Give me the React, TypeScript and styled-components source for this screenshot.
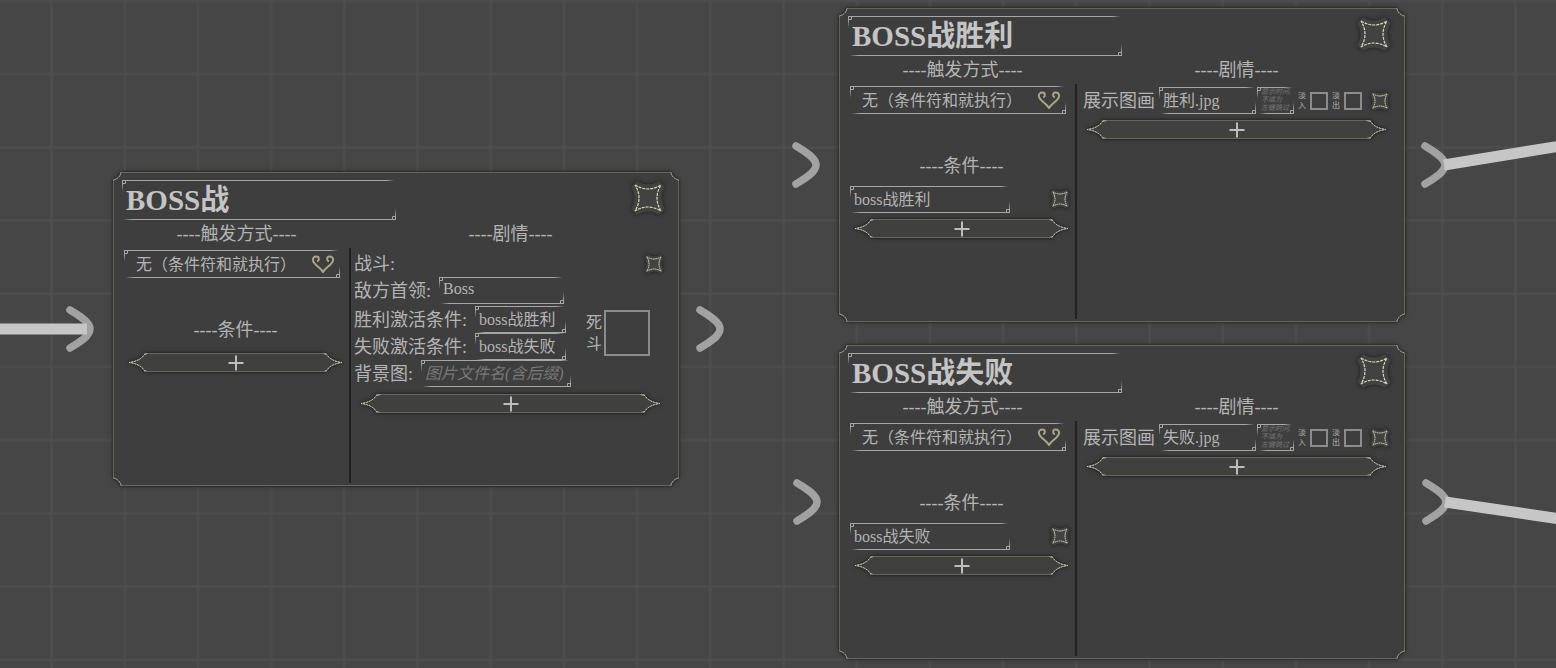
import React from 'react';
import styled, { createGlobalStyle } from 'styled-components';

const color = {
  canvas: '#464646',
  grid: '#4d4d4d',
  node: '#3e3e3e',
  edge: '#66665f',
  text: '#b4b4b4',
  title: '#c4c4c4',
  line: '#a6a6a6',
  faint: '#777777',
  ivory: '#d8d6c0',
  gold: '#aba684',
  wire: '#c6c6c6',
  port: '#a2a2a2',
};

const svgUrl = (width: number, height: number, body: string) =>
  `url("data:image/svg+xml,${encodeURIComponent(
    `<svg xmlns="http://www.w3.org/2000/svg" width="${width}" height="${height}">${body}</svg>`,
  )}")`;

/* Panel outline: straight edges with notched corners. */
const panelFrame = svgUrl(
  48,
  48,
  `<path d="M8 .5H40Q41 6 47.5 8V40Q41 42 40 47.5H8Q7 42 .5 40V8Q7 6 8 .5Z" fill="${color.node}" stroke="${color.edge}"/>
   <path d="M.5 8Q7 6 8 .5M40 .5Q41 6 47.5 8M47.5 40Q41 42 40 47.5M8 47.5Q7 42 .5 40" fill="none" stroke="${color.ivory}" stroke-dasharray="1 1"/>`,
);

/* Field outline: open corners, lines fading away at two ends. */
const fieldFrame = svgUrl(
  40,
  40,
  `<defs>
    <linearGradient id="t" gradientUnits="userSpaceOnUse" x1="0" x2="40" y1="0" y2="0"><stop offset=".75" stop-color="${color.line}"/><stop offset=".96" stop-color="${color.line}" stop-opacity="0"/></linearGradient>
    <linearGradient id="b" gradientUnits="userSpaceOnUse" x1="0" x2="40" y1="0" y2="0"><stop offset=".04" stop-color="${color.line}" stop-opacity="0"/><stop offset=".25" stop-color="${color.line}"/></linearGradient>
    <linearGradient id="l" x1="0" x2="0" y1="0" y2="1"><stop offset=".3" stop-color="${color.line}"/><stop offset="1" stop-color="${color.line}" stop-opacity="0"/></linearGradient>
    <linearGradient id="r" x1="0" x2="0" y1="0" y2="1"><stop offset="0" stop-color="${color.line}" stop-opacity="0"/><stop offset=".7" stop-color="${color.line}"/></linearGradient>
   </defs>
   <rect width="40" height="1" fill="url(#t)"/><rect y="39" width="40" height="1" fill="url(#b)"/>
   <rect width="1" height="12" fill="url(#l)"/><rect x="39" y="28" width="1" height="12" fill="url(#r)"/>
   <path d="M.5 .5h3v3h-3zM36.5 36.5h3v3h-3z" fill="none" stroke="${color.line}"/>`,
);

/* Long button outline: concave pointed ends. */
const plankFrame = svgUrl(
  60,
  19,
  `<path d="M17 .5H43Q47 8 59 9.5Q47 11 43 18.5H17Q13 11 1 9.5Q13 8 17 .5Z" fill="#40403f" stroke="${color.edge}"/>
   <path d="M17 .5Q13 8 1 9.5Q13 11 17 18.5M43 .5Q47 8 59 9.5Q47 11 43 18.5" fill="none" stroke="${color.ivory}" stroke-dasharray="2 1"/>`,
);

const GlobalStyle = createGlobalStyle`
  *, *::before, *::after { box-sizing: border-box; }
  body {
    margin: 0;
    background: ${color.canvas};
    color: ${color.text};
    font-family: "Liberation Serif", "Noto Sans CJK SC", serif;
    font-size: 18px;
    line-height: 28px;
  }
  input, select, textarea, button { margin: 0; font-family: inherit; color: inherit; }
`;

const Canvas = styled.main`
  position: relative;
  width: 100%;
  min-height: 100vh;
  overflow: hidden;
`;

const Backdrop = styled.svg`
  position: absolute;
  inset: 0;
  width: 100%;
  height: 100%;
  pointer-events: none;
`;

const Node = styled.article<{ $x: number; $y: number }>`
  position: absolute;
  left: ${(p) => p.$x}px;
  top: ${(p) => p.$y}px;
  width: 566px;
  padding: 8px 9px 3px;
  isolation: isolate;

  &::before {
    content: "";
    position: absolute;
    inset: 0;
    z-index: -1;
    border: 1px solid transparent;
    border-image: ${panelFrame} 12 fill / 12px;
    filter: drop-shadow(0 0 1px #222) drop-shadow(0 0 2px #2c2c2c);
  }
`;

const NodeHeader = styled.header`
  display: flex;
  justify-content: space-between;
  align-items: flex-start;
  height: 40px;
  padding-right: 4px;
`;

const Field = styled.input<{ $width?: number }>`
  width: ${(p) => (p.$width ? `${p.$width}px` : 'auto')};
  height: 27px;
  padding: 0 3px 3px;
  border: 1px solid transparent;
  border-image: ${fieldFrame} 13 / 13px;
  background: none;
  font-size: 16px;
  outline: none;

  &:placeholder-shown { padding-bottom: 0; }

  &::placeholder {
    color: ${color.faint};
    font-style: italic;
    opacity: 1;
  }
`;

const TitleField = styled(Field)`
  height: 40px;
  padding-bottom: 6px;
  font-size: 29px;
  font-weight: bold;
  color: ${color.title};
`;

const Columns = styled.div`
  display: grid;
  grid-template-columns: 229px 1fr;
  grid-template-rows: 28px minmax(235px, auto);
`;

const Heading = styled.h3`
  margin: 0;
  font-size: 18px;
  font-weight: normal;
  line-height: 28px;
  text-align: center;
`;

const TriggerColumn = styled.section`
  border-right: 2px solid #212121;
  padding-top: 2px;
`;

const StoryColumn = styled.section`
  padding: 3px 3px 0;
`;

const SelectBox = styled.div`
  display: grid;
  align-items: center;
  width: 216px;
  margin: 0 0 38px 2px;

  & > * { grid-area: 1 / 1; }
`;

const Select = styled.select`
  width: 100%;
  height: 28px;
  padding: 0 32px 0 11px;
  border: 1px solid transparent;
  border-image: ${fieldFrame} 13 / 13px;
  border-radius: 0;
  background: none;
  font-size: 16px;
  appearance: none;
  outline: none;
`;

const Ornament = styled.svg`
  justify-self: end;
  margin-right: 5px;
  fill: none;
  stroke: ${color.gold};
  stroke-width: 2;
  pointer-events: none;
`;

const ConditionList = styled.ul`
  list-style: none;
  margin: 0;
  padding: 4px 0 5px 2px;
`;

const Condition = styled.li`
  display: flex;
  align-items: center;
  justify-content: space-between;
  height: 30px;
  padding-right: 5px;
`;

const PlankButton = styled.button<{ $gap?: number }>`
  display: grid;
  place-items: center;
  width: calc(100% - 12px);
  height: 19px;
  margin: ${(p) => p.$gap ?? 0}px 6px 0;
  padding: 0;
  border: 1px solid transparent;
  border-image: ${plankFrame} 9 17 fill / 9px 17px;
  background: none;
  filter: drop-shadow(0 0 1px #222) drop-shadow(0 0 2px #2a2a2a);
  cursor: pointer;

  svg { stroke: #bdbdbd; stroke-width: 2; }
`;

const StarButton = styled.button<{ $size: number }>`
  display: block;
  flex: none;
  width: ${(p) => p.$size}px;
  height: ${(p) => p.$size}px;
  padding: 0;
  border: 0;
  background: none;
  cursor: pointer;

  svg { display: block; filter: drop-shadow(0 0 2px #1c1c1c); }
`;

const Row = styled.div`
  display: flex;
  align-items: center;
  justify-content: space-between;
  height: 26px;
  padding-right: 3px;
`;

const Label = styled.label`
  display: flex;
  align-items: center;
  gap: 8px;
  height: 27px;
  white-space: nowrap;
`;

const Outcome = styled.div`
  display: flex;
  align-items: center;
  gap: 20px;
  margin-top: 2px;
`;

const DuelLabel = styled.label`
  display: flex;
  align-items: center;
  gap: 2px;
  font-size: 16px;
  line-height: 21px;
`;

const FadeLabel = styled.label`
  display: flex;
  align-items: center;
  gap: 4px;
  font-size: 8px;
  line-height: 10px;
`;

const Stacked = styled.span`
  width: 1em;
  white-space: normal;
  word-break: break-all;
`;

const Check = styled.input.attrs({ type: 'checkbox' })<{ $size: number }>`
  width: ${(p) => p.$size}px;
  height: ${(p) => p.$size}px;
  border: 2px solid #8c8c8c;
  appearance: none;
  background: none;

  &:checked { background: #8c8c8c; }
`;

const PictureRow = styled.div`
  display: flex;
  align-items: center;
  gap: 4px;
  height: 27px;
  padding: 0 3px;
  white-space: nowrap;

  & > button { margin-left: auto; }
`;

const FileGroup = styled.div`
  display: flex;
  gap: 1px;
`;

const Note = styled.textarea`
  width: 37px;
  height: 27px;
  padding: 0 0 0 3px;
  border: 1px solid transparent;
  border-image: ${fieldFrame} 13 / 13px;
  background: none;
  font-size: 7px;
  line-height: 8px;
  white-space: pre;
  resize: none;
  overflow: hidden;
  outline: none;

  &::placeholder {
    color: ${color.faint};
    font-style: italic;
    opacity: 1;
  }
`;

const Star = ({ size, label }: { size: number; label: string }) => (
  <StarButton type="button" $size={size} aria-label={label}>
    <svg width={size} height={size} viewBox="0 0 36 36" fill="none">
      <path
        d="M7 1Q18 8 29 1L35 7Q28 18 35 29L29 35Q18 28 7 35L1 29Q8 18 1 7Z"
        fill="#424241"
      />
      <path
        d="M5 5Q18 13 31 5Q23 18 31 31Q18 23 5 31Q13 18 5 5Z"
        stroke={color.ivory}
        strokeWidth={size > 30 ? 1.2 : 1.8}
        strokeDasharray="3 1"
      />
    </svg>
  </StarButton>
);

const AddButton = ({ label, gap }: { label: string; gap?: number }) => (
  <PlankButton type="button" aria-label={label} $gap={gap}>
    <svg width="16" height="16" viewBox="0 0 16 16">
      <path d="M8 0.5V15.5M0.5 8H15.5" />
    </svg>
  </PlankButton>
);

type StoryNodeProps = {
  x: number;
  y: number;
  title: string;
  conditions: string[];
  children: React.ReactNode;
};

const StoryNode = ({ x, y, title, conditions, children }: StoryNodeProps) => (
  <Node $x={x} $y={y}>
    <NodeHeader>
      <TitleField $width={274} defaultValue={title} aria-label="标题" />
      <Star size={36} label="删除节点" />
    </NodeHeader>
    <Columns>
      <Heading>----触发方式----</Heading>
      <Heading>----剧情----</Heading>
      <TriggerColumn>
        <SelectBox>
          <Select aria-label="触发方式">
            <option>无（条件符和就执行）</option>
          </Select>
          <Ornament width="24" height="18" viewBox="0 0 24 18">
            <path d="M6 6C8.5 6 8.5 1.5 5.5 1.5C3 1.5 1.5 3 2 5.5C3 10 9 12 12 17C15 12 21 10 22 5.5C22.5 3 21 1.5 18.5 1.5C15.5 1.5 15.5 6 18 6" />
          </Ornament>
        </SelectBox>
        <Heading>----条件----</Heading>
        <ConditionList>
          {conditions.map((condition) => (
            <Condition key={condition}>
              <Field $width={160} defaultValue={condition} aria-label="条件" />
              <Star size={20} label="删除条件" />
            </Condition>
          ))}
        </ConditionList>
        <AddButton label="添加条件" />
      </TriggerColumn>
      <StoryColumn>{children}</StoryColumn>
    </Columns>
  </Node>
);

const BattleStory = () => (
  <>
    <Row>
      <span>战斗:</span>
      <Star size={20} label="删除战斗" />
    </Row>
    <Label>
      敌方首领:
      <Field $width={125} defaultValue="Boss" />
    </Label>
    <Outcome>
      <div>
        <Label>
          胜利激活条件:
          <Field $width={91} defaultValue="boss战胜利" />
        </Label>
        <Label>
          失败激活条件:
          <Field $width={91} defaultValue="boss战失败" />
        </Label>
      </div>
      <DuelLabel>
        <Stacked>死斗</Stacked>
        <Check $size={46} />
      </DuelLabel>
    </Outcome>
    <Label>
      背景图:
      <Field $width={150} placeholder="图片文件名(含后缀)" />
    </Label>
    <AddButton label="添加剧情" gap={7} />
  </>
);

const PictureStory = ({ file }: { file: string }) => (
  <>
    <PictureRow>
      <span>展示图画</span>
      <FileGroup>
        <Field $width={97} defaultValue={file} aria-label="图片文件" />
        <Note placeholder={'显示时间,\n不填为\n左键跳过'} aria-label="显示时间" />
      </FileGroup>
      <FadeLabel>
        <Stacked>淡入</Stacked>
        <Check $size={18} />
      </FadeLabel>
      <FadeLabel>
        <Stacked>淡出</Stacked>
        <Check $size={18} />
      </FadeLabel>
      <Star size={20} label="删除图画" />
    </PictureRow>
    <AddButton label="添加剧情" gap={6} />
  </>
);

const ports = [
  [70, 329],
  [700, 329],
  [796, 165],
  [1425, 165],
  [797, 502],
  [1426, 502],
];

const Wires = () => (
  <Backdrop fill="none" aria-hidden="true">
    <defs>
      <pattern id="grid" x="50" y="-0.5" width="73.2" height="73.2" patternUnits="userSpaceOnUse">
        <path d="M1.5 0V73.2M0 1.5H73.2" stroke={color.grid} strokeWidth="2.5" />
      </pattern>
    </defs>
    <rect width="100%" height="100%" fill="url(#grid)" />
    {ports.map(([x, y]) => (
      <path
        key={`${x}-${y}`}
        transform={`translate(${x} ${y})`}
        d="M0 -19C10 -13 20 -7 20 0C20 7 10 13 0 19"
        stroke={color.port}
        strokeWidth="7.5"
        strokeLinecap="round"
      />
    ))}
    <path
      d="M0 329H87M1444 165L1564 145.4M1445 502L1564 519.5"
      stroke={color.wire}
      strokeWidth="11"
    />
  </Backdrop>
);

export default function App() {
  return (
    <>
      <GlobalStyle />
      <Canvas>
        <Wires />
        <StoryNode x={113} y={172} title="BOSS战" conditions={[]}>
          <BattleStory />
        </StoryNode>
        <StoryNode x={839} y={8} title="BOSS战胜利" conditions={['boss战胜利']}>
          <PictureStory file="胜利.jpg" />
        </StoryNode>
        <StoryNode x={839} y={345} title="BOSS战失败" conditions={['boss战失败']}>
          <PictureStory file="失败.jpg" />
        </StoryNode>
      </Canvas>
    </>
  );
}
